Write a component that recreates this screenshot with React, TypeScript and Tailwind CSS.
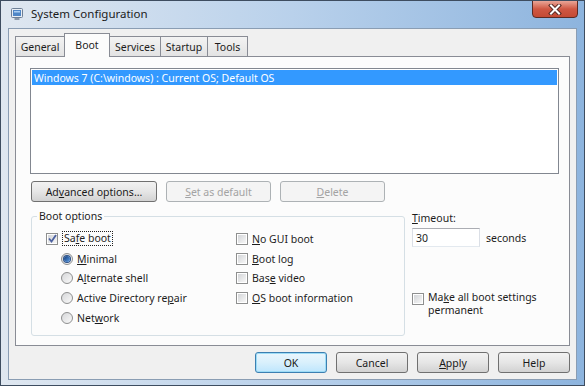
import React from 'react';

function AppIcon() {
  return (
    <svg width="14" height="14" viewBox="0 0 14 14">
      <rect x="1.5" y="1.5" width="11" height="9" rx="1" fill="#e8edf3" stroke="#6d7f96" />
      <rect x="3" y="3" width="8" height="6" fill="#4f86c6" />
      <rect x="4" y="4" width="6" height="1.5" fill="#a9cdf2" />
      <rect x="4.5" y="11" width="5" height="2" fill="#8a97a8" />
    </svg>
  );
}

function CloseX() {
  return (
    <svg width="14" height="11" viewBox="0 0 14 11">
      <path d="M3 1.5 L11 9.5 M11 1.5 L3 9.5" stroke="#5a2a24" strokeWidth="4" strokeLinecap="square" />
      <path d="M3 1.5 L11 9.5 M11 1.5 L3 9.5" stroke="#ffffff" strokeWidth="2" strokeLinecap="square" />
    </svg>
  );
}

function Check({ checked = false }: { checked?: boolean }) {
  return (
    <span className="w-[12px] h-[12px] shrink-0 border border-[#8e8f8f] bg-white p-px flex">
      <span className="flex-1 bg-gradient-to-br from-[#d3d5d8] to-[#f7f7f7] flex items-center justify-center">
        {checked && (
          <svg width="9" height="9" viewBox="0 0 9 9">
            <path d="M1 4.5 L3.5 7.5 L8 1" stroke="#4c61a0" strokeWidth="1.8" fill="none" />
          </svg>
        )}
      </span>
    </span>
  );
}

function Radio({ checked = false }: { checked?: boolean }) {
  return (
    <span className="w-[12px] h-[12px] shrink-0 rounded-full border border-[#8e8f8f] bg-gradient-to-br from-[#d6d7d9] to-[#fafafa] flex items-center justify-center">
      {checked && (
        <span className="w-[6px] h-[6px] rounded-full bg-gradient-to-br from-[#0e3a7a] to-[#5d9ee6] ring-1 ring-[#2a4f86]" />
      )}
    </span>
  );
}

function Btn({
  children,
  className,
  disabled = false,
  isDefault = false,
}: {
  children: React.ReactNode;
  className: string;
  disabled?: boolean;
  isDefault?: boolean;
}) {
  let look =
    'border-[#707070] bg-gradient-to-b from-[#f2f2f2] via-[#e6e6e6] to-[#d2d2d2] text-[#1a1a1a]';
  if (disabled) look = 'border-[#adb2b5] bg-[#f4f4f4] text-[#a3a3a3]';
  if (isDefault)
    look =
      'border-[#3c7fb1] bg-gradient-to-b from-[#eaf6fd] via-[#d9f0fc] to-[#bee6fd] text-[#1a1a1a] shadow-[inset_0_0_0_1px_#9ddcf6]';
  return (
    <div className={`${className} ${look} h-[21px] border rounded-[3px] flex items-center justify-center`}>
      {children}
    </div>
  );
}

function Tab({ label, selected = false, className }: { label: string; selected?: boolean; className: string }) {
  if (selected) {
    return (
      <div className={`${className} h-[24px] -ml-px relative z-10 bg-[#fcfcfc] border border-b-0 border-[#898c95] flex justify-center pt-[4px]`}>
        {label}
      </div>
    );
  }
  return (
    <div className={`${className} h-[20px] -ml-px mb-px border border-b-0 border-[#898c95] bg-gradient-to-b from-[#f3f3f3] to-[#e3e3e3] flex items-center justify-center`}>
      {label}
    </div>
  );
}

function Row({ children }: { children: React.ReactNode }) {
  return <div className="h-[19.7px] flex items-center gap-[4px]">{children}</div>;
}

export default function App() {
  return (
    <div className="w-[585px] h-[386px] flex flex-col overflow-hidden border border-[#3e4d60] bg-gradient-to-r from-[#dfe7f0] via-[#b9d1eb] to-[#8db4de] font-['Noto_Sans',sans-serif] text-[10.5px] leading-[14px] text-[#1c1c1c]">
      {/* title bar */}
      <div className="h-[27px] shrink-0 flex items-start">
        <div className="h-[26px] flex items-center pl-[9px] gap-[7px]">
          <AppIcon />
          <span className="text-[11.5px] text-[#1b1b1b]">System Configuration</span>
        </div>
        <div className="ml-auto mr-[6px] w-[46px] h-[18px] -mt-px rounded-b-[4px] border border-[#5b2a24] bg-gradient-to-b from-[#e9a597] via-[#cf5743] to-[#c44a34] flex items-center justify-center">
          <CloseX />
        </div>
      </div>

      {/* client area */}
      <div className="h-[352px] mx-[7px] border border-[#8a9db3] bg-[#f0f0f0] px-[6px] pt-[4px] flex flex-col">
        <div className="h-[24px] -mb-px flex items-end pl-px relative z-10">
          <Tab label="General" className="w-[50px]" />
          <Tab label="Boot" selected className="w-[46px]" />
          <Tab label="Services" className="w-[52px]" />
          <Tab label="Startup" className="w-[48px]" />
          <Tab label="Tools" className="w-[41px]" />
        </div>

        <div className="h-[290px] border border-[#898c95] bg-[#fcfcfc] flex flex-col pl-[14px]">
          {/* listbox */}
          <div className="mt-[11px] w-[529px] h-[106px] border border-[#828790] bg-white p-px">
            <div className="h-[15px] bg-[#3399ff] text-white flex items-center pl-[2px]">
              Windows 7 (C:\windows) : Current OS; Default OS
            </div>
          </div>

          <div className="mt-[7px] flex gap-[9px] pl-px">
            <Btn className="w-[126px]">
              Ad<u>v</u>anced options...
            </Btn>
            <Btn className="w-[105px]" disabled>
              <u>S</u>et as default
            </Btn>
            <Btn className="w-[105px]" disabled>
              <u>D</u>elete
            </Btn>
          </div>

          <div className="mt-[7px] flex">
            <fieldset className="ml-px w-[374px] h-[127px] border border-[#d5dfe5] rounded-[3px]">
              <legend className="ml-[5px] px-[2px]">Boot options</legend>
              <div className="pt-[6px] pl-[14px] flex">
                <div className="w-[190px] flex flex-col">
                  <Row>
                    <Check checked />
                    <span className="border border-dotted border-[#222] px-px leading-[13px]">
                      Sa<u>f</u>e boot
                    </span>
                  </Row>
                  <div className="pl-[15px] flex flex-col">
                    <Row>
                      <Radio checked />
                      <span>
                        <u>M</u>inimal
                      </span>
                    </Row>
                    <Row>
                      <Radio />
                      <span>
                        A<u>l</u>ternate shell
                      </span>
                    </Row>
                    <Row>
                      <Radio />
                      <span>
                        Active Directory re<u>p</u>air
                      </span>
                    </Row>
                    <Row>
                      <Radio />
                      <span>
                        Net<u>w</u>ork
                      </span>
                    </Row>
                  </div>
                </div>
                <div className="flex flex-col">
                  <Row>
                    <Check />
                    <span>
                      <u>N</u>o GUI boot
                    </span>
                  </Row>
                  <Row>
                    <Check />
                    <span>
                      <u>B</u>oot log
                    </span>
                  </Row>
                  <Row>
                    <Check />
                    <span>
                      Bas<u>e</u> video
                    </span>
                  </Row>
                  <Row>
                    <Check />
                    <span>
                      <u>O</u>S boot information
                    </span>
                  </Row>
                </div>
              </div>
            </fieldset>

            <div className="ml-[7px] flex flex-col pt-[2px]">
              <span>
                <u>T</u>imeout:
              </span>
              <div className="mt-[3px] flex items-center gap-[6px]">
                <div className="w-[68px] h-[19px] border border-[#abadb3] border-b-[#e3e9ef] border-x-[#dbdfe6] bg-white flex items-center pl-[3px]">
                  30
                </div>
                <span>seconds</span>
              </div>
              <div className="mt-[44px] flex gap-[4px]">
                <span className="mt-[2px]">
                  <Check />
                </span>
                <span className="leading-[13px]">
                  Ma<u>k</u>e all boot settings
                  <br />
                  permanent
                </span>
              </div>
            </div>
          </div>
        </div>

        {/* footer */}
        <div className="mt-[6px] flex justify-end gap-[9px]">
          <Btn className="w-[72px]" isDefault>
            OK
          </Btn>
          <Btn className="w-[72px]">Cancel</Btn>
          <Btn className="w-[72px]">
            <u>A</u>pply
          </Btn>
          <Btn className="w-[72px]">Help</Btn>
        </div>
      </div>
    </div>
  );
}
